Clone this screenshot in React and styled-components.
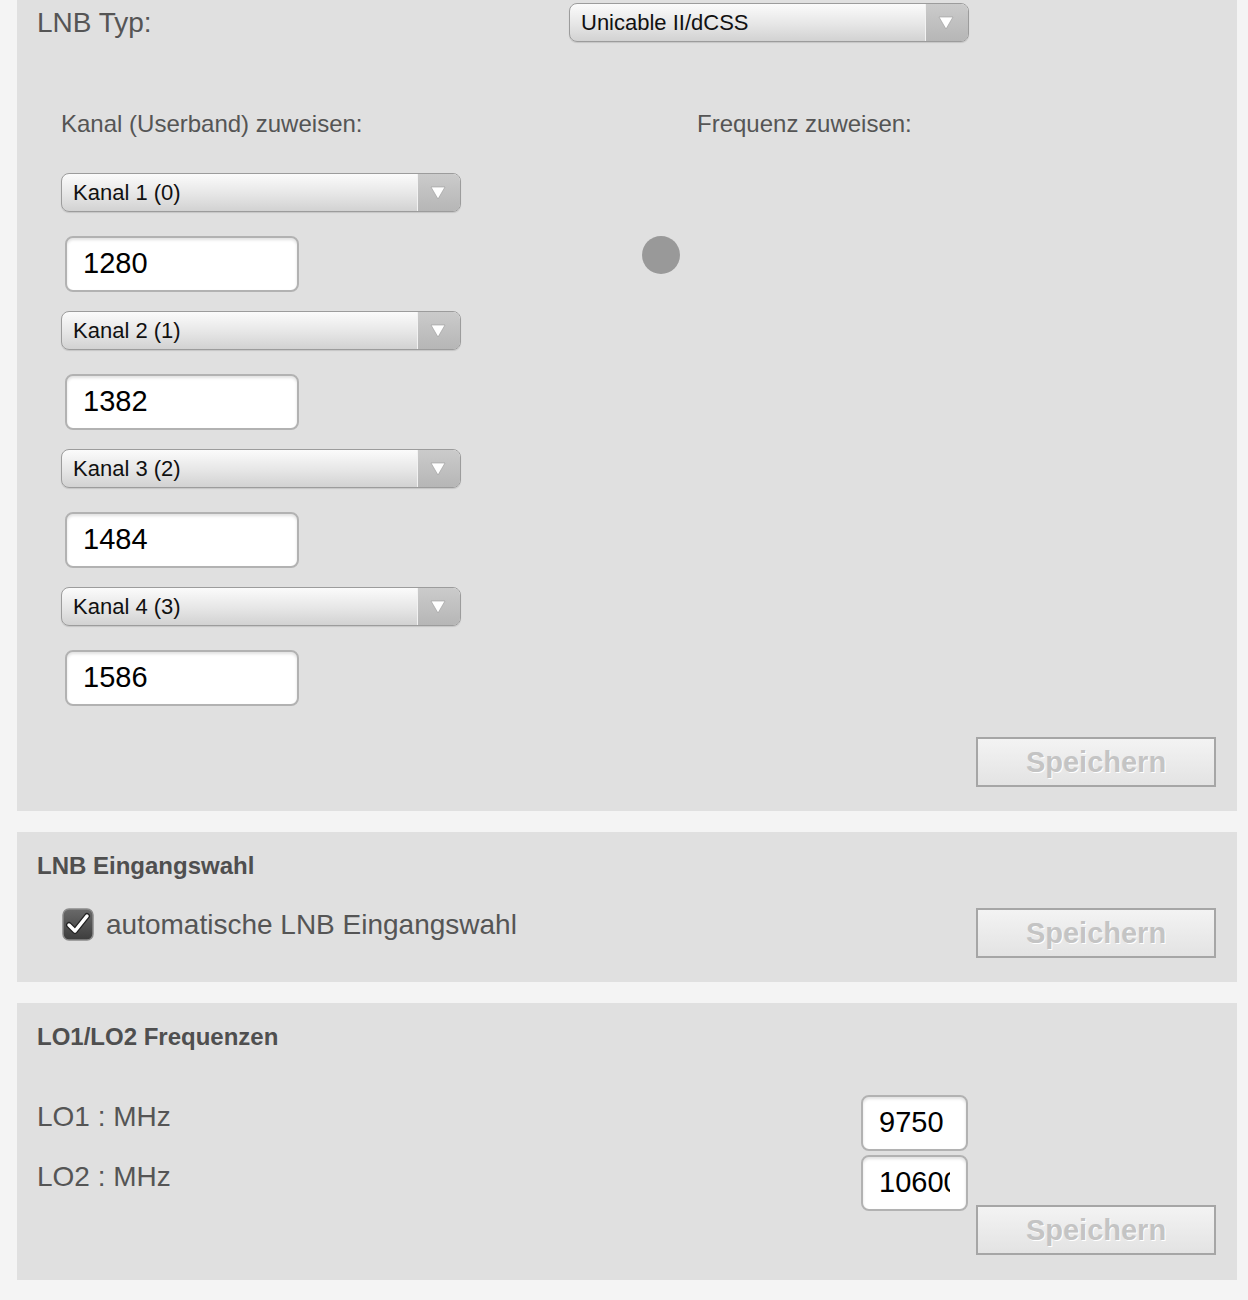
import React from "react";
import styled, { createGlobalStyle } from "styled-components";

const GlobalStyle = createGlobalStyle`
  body {
    margin: 0;
    background: #f4f4f4;
    font-family: "Liberation Sans", Arial, Helvetica, sans-serif;
  }
`;

const Page = styled.div`
  padding: 0 11px 20px 17px;
  display: flex;
  flex-direction: column;
  gap: 21px;
`;

const Panel = styled.section`
  background: #e0e0e0;
  padding: ${(p) => p.$pad || "20px 21px 24px 20px"};
  display: flex;
  flex-direction: column;
`;

const TypeRow = styled.div`
  display: flex;
  align-items: center;
  height: 39px;
`;

const BigLabel = styled.div`
  font-size: 28px;
  color: #555;
  width: ${(p) => p.$width || "auto"};
  line-height: ${(p) => p.$lh || "32px"};
`;

const Columns = styled.div`
  display: grid;
  grid-template-columns: 636px 1fr;
  margin: 68px 0 0 24px;
`;

const Column = styled.div`
  display: flex;
  flex-direction: column;
  align-items: flex-start;
`;

const ColumnLabel = styled.div`
  font-size: 24px;
  line-height: 28px;
  color: #555;
  margin-bottom: 35px;
`;

const Channel = styled.div`
  display: flex;
  flex-direction: column;
  align-items: flex-start;
  gap: 24px;
  margin-bottom: 19px;
  &:last-child {
    margin-bottom: 0;
  }
`;

const SelectBox = styled.div`
  box-sizing: border-box;
  width: 400px;
  height: 39px;
  border: 1px solid #9c9c9c;
  border-radius: 8px;
  background: linear-gradient(#fbfbfb, #e6e6e6 55%, #d2d2d2);
  box-shadow: 0 1px 1px rgba(0, 0, 0, 0.12);
  display: flex;
  overflow: hidden;
`;

const SelectText = styled.div`
  flex: 1;
  font-size: 22px;
  color: #111;
  line-height: 37px;
  padding-left: 11px;
`;

const SelectArrow = styled.div`
  width: 40px;
  border-left: 1px solid #f2f2f2;
  background: linear-gradient(#cbcbcb, #b6b6b6);
  display: flex;
  align-items: center;
  justify-content: center;
  padding-right: 2px;
`;

const NumberInput = styled.input`
  box-sizing: border-box;
  width: ${(p) => p.$width || "234px"};
  height: 56px;
  margin-left: ${(p) => p.$offset || "0"};
  padding: 0 16px 2px;
  border: 2px solid #b2b2b2;
  border-radius: 8px;
  background: #fff;
  box-shadow: inset 0 2px 3px rgba(0, 0, 0, 0.12);
  font-family: "Liberation Sans", Arial, sans-serif;
  font-size: 29px;
  color: #000;
  outline: none;
`;

const Spinner = styled.div`
  width: 38px;
  height: 38px;
  border-radius: 50%;
  background: #999;
  margin: 63px 0 0 -55px;
`;

const Footer = styled.div`
  display: flex;
  justify-content: flex-end;
  margin-top: ${(p) => p.$top || "0"};
`;

const SaveButton = styled.button`
  box-sizing: border-box;
  width: 240px;
  height: 50px;
  border: 2px solid #a6a6a6;
  background: linear-gradient(#f3f3f3, #e3e3e3);
  font-family: "Liberation Sans", Arial, sans-serif;
  font-weight: bold;
  font-size: 29px;
  color: #c4c4c4;
  text-shadow: 1px 1px 0 #fff;
  padding: 0;
`;

const Title = styled.h3`
  margin: 0;
  font-size: 24px;
  line-height: 28px;
  font-weight: bold;
  color: #4f4f4f;
`;

const OptionRow = styled.div`
  display: flex;
  justify-content: space-between;
  align-items: flex-start;
  margin-top: 28px;
`;

const CheckLabel = styled.label`
  display: flex;
  align-items: center;
  gap: 12px;
  padding-left: 25px;
  font-size: 28px;
  line-height: 32px;
  color: #555;
`;

const LoList = styled.div`
  display: flex;
  flex-direction: column;
  gap: 4px;
  width: 931px;
  margin-top: 44px;
`;

const LoRow = styled.div`
  display: flex;
  justify-content: space-between;
  align-items: flex-start;
`;

const Arrow = () => (
  <svg width="16" height="14" viewBox="0 0 16 14">
    <path d="M1 1 H15 L8 13 Z" fill="#fff" stroke="#9a9a9a" strokeWidth="0.6" />
  </svg>
);

const Select = ({ value }) => (
  <SelectBox>
    <SelectText>{value}</SelectText>
    <SelectArrow>
      <Arrow />
    </SelectArrow>
  </SelectBox>
);

const CheckMark = () => (
  <svg width="32" height="33" viewBox="0 0 32 33">
    <defs>
      <linearGradient id="cb" x1="0" y1="0" x2="0" y2="1">
        <stop offset="0" stopColor="#6a6a6a" />
        <stop offset="1" stopColor="#3c3c3c" />
      </linearGradient>
    </defs>
    <rect x="1" y="1" width="30" height="31" rx="6" fill="url(#cb)" stroke="#8a8a8a" strokeWidth="1.5" />
    <path d="M7 17 L13 23 L25 8" fill="none" stroke="#222" strokeWidth="6" strokeLinecap="round" strokeLinejoin="round" />
    <path d="M7 17 L13 23 L25 8" fill="none" stroke="#fff" strokeWidth="3.5" strokeLinecap="round" strokeLinejoin="round" />
  </svg>
);

const channels = [
  { name: "Kanal 1 (0)", freq: "1280" },
  { name: "Kanal 2 (1)", freq: "1382" },
  { name: "Kanal 3 (2)", freq: "1484" },
  { name: "Kanal 4 (3)", freq: "1586" },
];

const loValues = [
  { label: "LO1 : MHz", value: "9750" },
  { label: "LO2 : MHz", value: "10600" },
];

export default function App() {
  return (
    <>
      <GlobalStyle />
      <Page>
        <Panel $pad="3px 21px 24px 20px">
          <TypeRow>
            <BigLabel $width="532px">LNB Typ:</BigLabel>
            <Select value="Unicable II/dCSS" />
          </TypeRow>
          <Columns>
            <Column>
              <ColumnLabel>Kanal (Userband) zuweisen:</ColumnLabel>
              {channels.map((c) => (
                <Channel key={c.name}>
                  <Select value={c.name} />
                  <NumberInput $offset="4px" defaultValue={c.freq} readOnly />
                </Channel>
              ))}
            </Column>
            <Column>
              <ColumnLabel>Frequenz zuweisen:</ColumnLabel>
              <Spinner />
            </Column>
          </Columns>
          <Footer $top="31px">
            <SaveButton>Speichern</SaveButton>
          </Footer>
        </Panel>

        <Panel>
          <Title>LNB Eingangswahl</Title>
          <OptionRow>
            <CheckLabel>
              <CheckMark />
              automatische LNB Eingangswahl
            </CheckLabel>
            <SaveButton>Speichern</SaveButton>
          </OptionRow>
        </Panel>

        <Panel $pad="20px 21px 25px 20px">
          <Title>LO1/LO2 Frequenzen</Title>
          <LoList>
            {loValues.map((lo) => (
              <LoRow key={lo.label}>
                <BigLabel $lh="44px">{lo.label}</BigLabel>
                <NumberInput $width="107px" defaultValue={lo.value} readOnly />
              </LoRow>
            ))}
          </LoList>
          <Footer $top="-6px">
            <SaveButton>Speichern</SaveButton>
          </Footer>
        </Panel>
      </Page>
    </>
  );
}
